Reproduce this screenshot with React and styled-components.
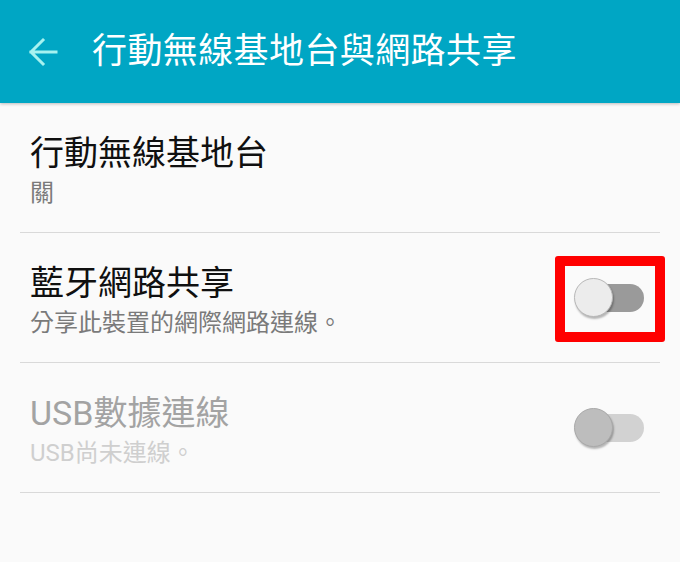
import React from "react";
import styled, { createGlobalStyle } from "styled-components";

const Global = createGlobalStyle`
  html, body { margin: 0; padding: 0; background: #fafafa; }
  body { font-family: "Roboto", "Noto Sans CJK TC", sans-serif; }
`;

const Page = styled.div`
  width: 680px;
  height: 562px;
  background: #fafafa;
  overflow: hidden;
`;

const Header = styled.header`
  height: 103px;
  background: #00a6c4;
  display: flex;
  align-items: center;
  box-shadow: 0 1px 3px rgba(0, 0, 0, 0.25);
  position: relative;
  z-index: 1;
`;

const BackButton = styled.div`
  width: 92px;
  height: 103px;
  display: flex;
  align-items: center;
  padding-left: 28px;
  box-sizing: border-box;
`;

const HeaderTitle = styled.h1`
  margin: 0;
  font-family: "Roboto", "Noto Sans CJK TC", sans-serif;
  font-weight: 400;
  font-size: 35px;
  color: #ffffff;
  line-height: 1;
  letter-spacing: 0.4px;
  margin-top: 0;
`;

const List = styled.div`
  display: flex;
  flex-direction: column;
`;

const Row = styled.div`
  margin: 0 20px;
  height: 129px;
  border-bottom: 1px solid #d9d9d9;
  display: flex;
  align-items: center;
  justify-content: space-between;
  padding: 0 16px 0 10px;
`;

const Texts = styled.div`
  display: flex;
  flex-direction: column;
  margin-top: 6px;
`;

const Title = styled.div`
  font-size: 34px;
  line-height: 44px;
  color: ${(p) => (p.$disabled ? "#a3a3a3" : "#101010")};
`;

const Subtitle = styled.div`
  font-size: 24px;
  line-height: 36px;
  color: ${(p) => (p.$disabled ? "#cfcfcf" : "#7a7a7a")};
`;

const SwitchWrap = styled.div`
  position: relative;
  width: 70px;
  height: 40px;
  display: flex;
  align-items: center;
`;

const Track = styled.div`
  position: absolute;
  left: 8px;
  right: 0;
  top: 6px;
  height: 28px;
  border-radius: 14px;
  background: ${(p) => (p.$disabled ? "#d2d2d2" : "#9a9a9a")};
`;

const Thumb = styled.div`
  position: absolute;
  left: 0;
  top: 0;
  width: 39px;
  height: 39px;
  border-radius: 50%;
  box-sizing: border-box;
  background: ${(p) => (p.$disabled ? "#bdbdbd" : "#ececec")};
  border: 1px solid ${(p) => (p.$disabled ? "#a9a9a9" : "#b8b8b8")};
  box-shadow: 1px 2px 2px rgba(0, 0, 0, 0.28);
`;

const Highlight = styled.div`
  position: absolute;
  left: -19px;
  top: -22px;
  width: 110px;
  height: 86px;
  box-sizing: border-box;
  border: 10px solid #ff0000;
  border-radius: 3px;
  pointer-events: none;
`;

const Switch = ({ disabled, highlight }) => (
  <SwitchWrap>
    <Track $disabled={disabled} />
    <Thumb $disabled={disabled} />
    {highlight && <Highlight />}
  </SwitchWrap>
);

const BackArrow = () => (
  <svg width="30" height="30" viewBox="0 0 30 30" fill="none">
    <path
      d="M28 15H3M15 3L3 15L15 27"
      stroke="#a6f2f0"
      strokeWidth="3"
      strokeLinecap="square"
      strokeLinejoin="miter"
    />
  </svg>
);

export default function App() {
  return (
    <Page>
      <Global />
      <Header>
        <BackButton>
          <BackArrow />
        </BackButton>
        <HeaderTitle>行動無線基地台與網路共享</HeaderTitle>
      </Header>
      <List>
        <Row>
          <Texts>
            <Title>行動無線基地台</Title>
            <Subtitle>關</Subtitle>
          </Texts>
        </Row>
        <Row>
          <Texts>
            <Title>藍牙網路共享</Title>
            <Subtitle>分享此裝置的網際網路連線。</Subtitle>
          </Texts>
          <Switch highlight />
        </Row>
        <Row>
          <Texts>
            <Title $disabled>USB數據連線</Title>
            <Subtitle $disabled>USB尚未連線。</Subtitle>
          </Texts>
          <Switch disabled />
        </Row>
      </List>
    </Page>
  );
}
